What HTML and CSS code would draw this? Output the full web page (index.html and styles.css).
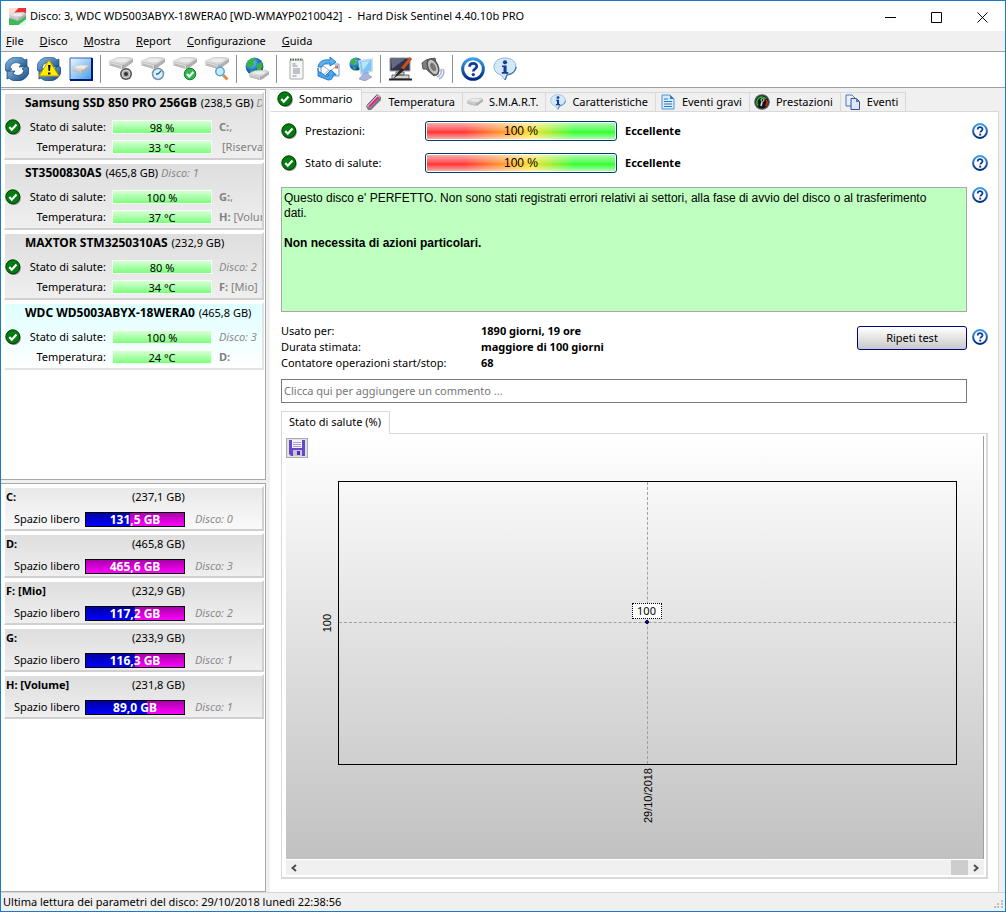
FILE: index.html
```
<!DOCTYPE html>
<html lang="it">

<head>
    <meta charset="UTF-8">
    <meta name="viewport" content="width=device-width, initial-scale=1.0">
    <title>Hard Disk Sentinel</title>
    <link rel="stylesheet" href="styles.css">
</head>

<body>
    <!-- shared icons -->
    <svg class="defs" aria-hidden="true">
        <defs>
            <linearGradient id="gBlue" x1="0" y1="0" x2="0" y2="1">
                <stop offset="0" stop-color="#3aa0e8" />
                <stop offset="1" stop-color="#002a80" />
            </linearGradient>
            <linearGradient id="gArrow" x1="0" y1="0" x2="1" y2="1">
                <stop offset="0" stop-color="#8fc4ea" />
                <stop offset="1" stop-color="#0b4380" />
            </linearGradient>
            <linearGradient id="gDisk" x1="0" y1="0" x2="1" y2="1">
                <stop offset="0" stop-color="#f4f4f4" />
                <stop offset="1" stop-color="#c4c4c4" />
            </linearGradient>
            <linearGradient id="gBox" x1="0" y1="0" x2="1" y2="1">
                <stop offset="0" stop-color="#f0f8ff" />
                <stop offset="1" stop-color="#3f9be8" />
            </linearGradient>
            <radialGradient id="gGlobe" cx="0.35" cy="0.3" r="0.8">
                <stop offset="0" stop-color="#8cd0ff" />
                <stop offset="0.5" stop-color="#1f70d0" />
                <stop offset="1" stop-color="#083070" />
            </radialGradient>
            <symbol id="ok" viewBox="0 0 16 16">
                <circle cx="8.8" cy="9" r="7" fill="#888" />
                <circle cx="7.8" cy="7.8" r="7" fill="#007c10" stroke="#003c00" />
                <path d="M4.3 8l2.5 2.7 4.7-5.2" fill="none" stroke="#fff" stroke-width="2.2" />
            </symbol>
            <symbol id="help" viewBox="0 0 16 16">
                <circle cx="8" cy="8" r="6.9" fill="#fff" stroke="url(#gBlue)" stroke-width="2" />
                <path d="M5.7 6.5c0-3 4.8-3 4.8-.2 0 1.6-2.3 1.6-2.3 3.3" fill="none" stroke="#123c96" stroke-width="1.8" />
                <circle cx="8.2" cy="11.7" r="1.1" fill="#123c96" />
            </symbol>
            <symbol id="info" viewBox="0 0 24 24">
                <path d="M12 1C5 1 1 5 1 10c0 4 3 7 7 8l4 5 2-5c5-1 9-4 9-8 0-5-4-9-11-9z" fill="#d4e8fa" stroke="#8cb4d8" />
                <path d="M12 23l2-5c5-1 9-4 9-8" fill="none" stroke="#4478a8" stroke-width="1.4" />
                <circle cx="12" cy="5.3" r="2.1" fill="#123c96" />
                <path d="M9 8.5h4.6v6.6h1.7v1.7H8.8v-1.7h1.7v-5H9z" fill="#123c96" />
            </symbol>
            <symbol id="disk" viewBox="0 0 24 12">
                <path d="M0 5L7 1l13-1 4 2v3l-8 6-3 1L0 8z" fill="#a4a4a4" />
                <path d="M0 4.500L7 .8 20 0l4 2-8 5.500-3 .5z" fill="url(#gDisk)" stroke="#c0c0c0" stroke-width=".5" />
                <path d="M0 4.800l13 3.400V12L0 8z" fill="#dcdcdc" />
                <path d="M1 6.800l11 3M1 8l11 3" stroke="#9c9c9c" stroke-width=".6" />
                <path d="M14 8.500l9.500-5.800V5L16 10.500l-2 .8z" fill="#b0b0b0" />
                <ellipse cx="13" cy="3.400" rx="6" ry="2" fill="#ececec" />
            </symbol>
            <symbol id="refresh" viewBox="0 0 24 24">
                <path d="M0 13C-1 5 5 0 12 0c4 0 6 1 8 3l2-1v8h-8l2-2.500C12 4 6 5.500 5 11l2 1-4 3z" fill="url(#gArrow)" stroke="#174f80" stroke-width=".7" />
                <path d="M24 11c1 8-5 13-12 13-4 0-6-1-8-3l-2 1v-8h8l-2 2.500c4 3.500 10 2 11-3.500l-2-1 4-3z" fill="url(#gArrow)" stroke="#0a3566" stroke-width=".7" />
            </symbol>
            <symbol id="globe" viewBox="0 0 16 16">
                <circle cx="8" cy="8" r="7.500" fill="url(#gGlobe)" />
                <path d="M3 3c3-3 6-2 6-1L7 4l1 2-3 3-3-1-1-2zM10 6l4-2 1 4-3 5-2-2zM5 11l3 1-1 3-3-2z" fill="#36b43c" />
            </symbol>
        </defs>
    </svg>

    <div class="window">
        <header class="titlebar">
            <svg class="app-icon" viewBox="0 0 18 18">
                <path d="M0 0h18v8H0z" fill="#ec3038" />
                <path d="M0 8h18v10H0z" fill="#3cbc58" />
                <path d="M0 0h10L2 9H0z" fill="#fbdcdc" />
                <path d="M10 18h8v-6z" fill="#e4fae8" />
                <use href="#disk" x="0" y="4" width="18" height="10" />
            </svg>
            <span class="title">Disco: 3, WDC WD5003ABYX-18WERA0 [WD-WMAYP0210042]  -  Hard Disk Sentinel 4.40.10b PRO</span>
            <div class="win-buttons">
                <button aria-label="Riduci a icona"><svg viewBox="0 0 11 11"><path d="M0 5.500h11" /></svg></button>
                <button aria-label="Ingrandisci"><svg viewBox="0 0 11 11"><path d="M.5.5h10v10H.5z" /></svg></button>
                <button aria-label="Chiudi"><svg viewBox="0 0 11 11"><path d="M.5.500l10 10M10.500.500l-10 10" /></svg></button>
            </div>
        </header>

        <nav class="menu">
            <a href="#"><u>F</u>ile</a>
            <a href="#"><u>D</u>isco</a>
            <a href="#"><u>M</u>ostra</a>
            <a href="#"><u>R</u>eport</a>
            <a href="#"><u>C</u>onfigurazione</a>
            <a href="#"><u>G</u>uida</a>
        </nav>

        <div class="toolbar">
            <button aria-label="Aggiorna"><svg viewBox="0 0 24 24"><use href="#refresh" /></svg></button>
            <button aria-label="Aggiorna avvisi"><svg viewBox="0 0 24 24"><use href="#refresh" />
                <path d="M12 3l10 16H2z" fill="#ffee00" stroke="#c09800" stroke-linejoin="round" />
                <path d="M11 8h2.600l-.6 6h-1.400zM11 15.500h2.400v2H11z" fill="#111" /></svg></button>
            <button aria-label="Disco"><svg viewBox="0 0 24 24">
                <path d="M1 1h22v22H1z" fill="url(#gBox)" stroke="#2c62b8" />
                <path d="M23 1v22H1" fill="none" stroke="#001a78" stroke-width="2" />
                <use href="#disk" x="3" y="7" width="17" height="10" /></svg></button>
            <i class="sep"></i>
            <button aria-label="Test disco"><svg viewBox="0 0 24 24"><use href="#disk" width="24" height="12" />
                <circle cx="17" cy="17" r="6" fill="#555" /><circle cx="17" cy="17" r="4" fill="#aaa" stroke="#ddd" />
                <circle cx="17" cy="17" r="2" fill="#333" /></svg></button>
            <button aria-label="Test breve"><svg viewBox="0 0 24 24"><use href="#disk" width="24" height="12" />
                <circle cx="17" cy="17" r="5.500" fill="#d8f0ff" stroke="#7890a4" stroke-width="1.500" />
                <path d="M17 17l3-3M17 17h-2" stroke="#1a68b0" stroke-width="1.300" /></svg></button>
            <button aria-label="Test esteso"><svg viewBox="0 0 24 24"><use href="#disk" width="24" height="12" />
                <circle cx="17" cy="17" r="5.800" fill="#2cb84c" stroke="#167a30" />
                <path d="M14 17l2.300 2.500 4-4.500" fill="none" stroke="#fff" stroke-width="2" /></svg></button>
            <button aria-label="Cerca"><svg viewBox="0 0 24 24"><use href="#disk" width="24" height="12" />
                <path d="M18 18l4.500 4.500" stroke="#d89048" stroke-width="3" />
                <circle cx="15" cy="14.500" r="4.200" fill="#c4ecff" stroke="#5ca0d8" stroke-width="1.500" /></svg></button>
            <i class="sep"></i>
            <button aria-label="Web"><svg viewBox="0 0 24 24"><use href="#globe" x="0" y="0" width="19" height="19" />
                <use href="#disk" x="4" y="12" width="20" height="12" /></svg></button>
            <i class="sep"></i>
            <button aria-label="Rapporto"><svg viewBox="0 0 24 24">
                <path d="M5 3h13v19H5z" fill="#f6f8f8" stroke="#a4acac" />
                <path d="M5 2.500h13" stroke="#686850" stroke-width="2" stroke-dasharray="1.500 1" />
                <path d="M7.500 7h3M7.500 9h5M8 12h7M8 14h7M8 16h7M7.500 19h4" stroke="#889" /></svg></button>
            <button aria-label="Invia rapporto"><svg viewBox="0 0 24 24">
                <path d="M4 7h18v12H4z" fill="#fff" stroke="#6c9cc8" /><path d="M18 8.500h3v3h-3z" fill="#e05848" />
                <path d="M5 8l8 6 8-6M5 19l7-6M21 19l-7-6" fill="none" stroke="#94b4d4" />
                <path d="M1 10C2 4 7 2 13 3V0l6 5-6 4V6C8 6 6 7 5 10z" fill="#56b4f4" stroke="#1668b0" stroke-width=".8" />
                <path d="M1 11v8l10 4c4 0 5-2 5-5h3l-5-5-5 5h3c0 2-3 2-6-1l-5-3z" fill="#4aa4ee" stroke="#1a68b8" stroke-width=".8" /></svg></button>
            <button aria-label="Rete"><svg viewBox="0 0 24 24"><use href="#globe" width="14" height="14" />
                <path d="M10 4l13-2v12l-11 3z" fill="#7cc4f8" stroke="#c0d8ec" stroke-width="1.500" />
                <path d="M12 5l9-1.500-7 10z" fill="#b8e4ff" />
                <path d="M15 16l4-1 .5 3 3.500 2-7 4-6-2z" fill="#a8b4dc" stroke="#8490b8" stroke-width=".6" /></svg></button>
            <i class="sep"></i>
            <button aria-label="Aspetto"><svg viewBox="0 0 24 24">
                <path d="M1 1h20v13H1z" fill="#30344c" stroke="#989ca8" /><path d="M2 2h14L3 12z" fill="#646a84" />
                <path d="M7 15h8v3H7zM3 18h17v4H3z" fill="#d4d4d4" stroke="#666" /><path d="M0 22.500h23" stroke="#222" stroke-width="2" />
                <path d="M22 1L13 12" stroke="#d04c1c" stroke-width="3" /><path d="M13 11l-3 3-6 8 8-6 3-3z" fill="#28201c" /></svg></button>
            <button aria-label="Suoni"><svg viewBox="0 0 24 24">
                <path d="M16 20c3-1 5-4 4-8M18 22c4-2 6-6 4-10" fill="none" stroke="#a8b0d4" stroke-width="1.600" />
                <path d="M1 6l4-3 9-2 3 15-4 3-8-7H2z" fill="#808080" stroke="#555" />
                <ellipse cx="12" cy="10" rx="5" ry="8.500" transform="rotate(-25 12 10)" fill="#c4c4c4" stroke="#555" stroke-width="1.500" />
                <ellipse cx="12" cy="10" rx="2.500" ry="4.500" transform="rotate(-25 12 10)" fill="#777" /></svg></button>
            <i class="sep"></i>
            <button aria-label="Aiuto"><svg viewBox="0 0 24 24"><use href="#help" width="24" height="24" /></svg></button>
            <button aria-label="Informazioni"><svg viewBox="0 0 24 24"><use href="#info" width="24" height="24" /></svg></button>
        </div>

        <div class="main">
            <aside class="sidebar">
                <div class="list disks">
                    <div class="disk">
                        <h3><b>Samsung SSD 850 PRO 256GB</b> (238,5 GB) <em>Disco: 0</em></h3>
                        <svg class="ok"><use href="#ok" /></svg>
                        <span class="lbl">Stato di salute:</span><span class="bar">98 %</span><span class="side"><b>C:</b>,</span>
                        <span class="lbl">Temperatura:</span><span class="bar">33 °C</span><span class="side indent">[Riservato]</span>
                    </div>
                    <div class="disk">
                        <h3><b>ST3500830AS</b> (465,8 GB) <em>Disco: 1</em></h3>
                        <svg class="ok"><use href="#ok" /></svg>
                        <span class="lbl">Stato di salute:</span><span class="bar">100 %</span><span class="side"><b>G:</b>,</span>
                        <span class="lbl">Temperatura:</span><span class="bar">37 °C</span><span class="side"><b>H:</b> [Volume]</span>
                    </div>
                    <div class="disk">
                        <h3><b>MAXTOR STM3250310AS</b> (232,9 GB)</h3>
                        <svg class="ok"><use href="#ok" /></svg>
                        <span class="lbl">Stato di salute:</span><span class="bar">80 %</span><span class="side"><em>Disco: 2</em></span>
                        <span class="lbl">Temperatura:</span><span class="bar">34 °C</span><span class="side"><b>F:</b> [Mio]</span>
                    </div>
                    <div class="disk selected">
                        <h3><b>WDC WD5003ABYX-18WERA0</b> (465,8 GB)</h3>
                        <svg class="ok"><use href="#ok" /></svg>
                        <span class="lbl">Stato di salute:</span><span class="bar">100 %</span><span class="side"><em>Disco: 3</em></span>
                        <span class="lbl">Temperatura:</span><span class="bar">24 °C</span><span class="side"><b>D:</b></span>
                    </div>
                </div>

                <div class="list volumes">
                    <div class="volume current">
                        <b>C:</b><span class="size">(237,1 GB)</span>
                        <span class="free">Spazio libero</span>
                        <span class="usage"><i style="width: 45%"></i><span>131,5 GB</span></span><em>Disco: 0</em>
                    </div>
                    <div class="volume">
                        <b>D:</b><span class="size">(465,8 GB)</span>
                        <span class="free">Spazio libero</span>
                        <span class="usage"><i style="width: 0%"></i><span>465,6 GB</span></span><em>Disco: 3</em>
                    </div>
                    <div class="volume">
                        <b>F: [Mio]</b><span class="size">(232,9 GB)</span>
                        <span class="free">Spazio libero</span>
                        <span class="usage"><i style="width: 50%"></i><span>117,2 GB</span></span><em>Disco: 2</em>
                    </div>
                    <div class="volume">
                        <b>G:</b><span class="size">(233,9 GB)</span>
                        <span class="free">Spazio libero</span>
                        <span class="usage"><i style="width: 50%"></i><span>116,3 GB</span></span><em>Disco: 1</em>
                    </div>
                    <div class="volume">
                        <b>H: [Volume]</b><span class="size">(231,8 GB)</span>
                        <span class="free">Spazio libero</span>
                        <span class="usage"><i style="width: 62%"></i><span>89,0 GB</span></span><em>Disco: 1</em>
                    </div>
                </div>
            </aside>

            <section class="content">
                <div class="tabs">
                    <button class="tab active"><svg viewBox="0 0 16 16"><use href="#ok" /></svg>Sommario</button>
                    <button class="tab"><svg viewBox="0 0 16 16">
                        <path d="M0 12L11 0l4 3v3L5 16H2z" fill="#777" /><path d="M1 12L11 1l3 2L4 14z" fill="#d8d8d8" />
                        <path d="M3 13l9.500-10" stroke="#e0208c" stroke-width="2.200" /><path d="M1.500 11l9-9.500" stroke="#555" /></svg>Temperatura</button>
                    <button class="tab"><svg viewBox="0 0 16 16"><use href="#disk" y="3" width="16" height="10" /></svg>S.M.A.R.T.</button>
                    <button class="tab"><svg viewBox="0 0 16 16"><use href="#info" width="16" height="16" /></svg>Caratteristiche</button>
                    <button class="tab"><svg viewBox="0 0 16 16">
                        <path d="M2 1h8l4 4v10H2z" fill="#d8ecfc" stroke="#4c94d8" /><path d="M10 1v4h4z" fill="#2c7cc8" />
                        <path d="M4 5h4M4 7.500h8M4 10h8M4 12.500h8" stroke="#2a78c8" /></svg>Eventi gravi</button>
                    <button class="tab"><svg viewBox="0 0 16 16">
                        <circle cx="8" cy="8" r="7.800" fill="#555" /><circle cx="8" cy="8" r="6" fill="#0c1c10" stroke="#111" />
                        <path d="M4 11.500A5 5 0 1 1 12 5" fill="none" stroke="#24c03c" stroke-width="1.500" />
                        <path d="M12.500 6a5 5 0 0 1-1 6" fill="none" stroke="#e02818" stroke-width="1.500" />
                        <circle cx="8.500" cy="6" r="1.500" fill="none" stroke="#ddd" /><path d="M8 8l-1 4" stroke="#ddd" stroke-width="1.500" /></svg>Prestazioni</button>
                    <button class="tab"><svg viewBox="0 0 16 16">
                        <path d="M1 1h6l3 3v8H1z" fill="#e8f0fc" stroke="#5474b4" /><path d="M6 4.500h5.500l3 3v8H6z" fill="#dce8fa" stroke="#34509c" />
                        <path d="M11 4.500V8h3.500z" fill="#5474b4" /></svg>Eventi</button>
                </div>

                <div class="page">
                    <div class="row rating">
                        <svg class="ok"><use href="#ok" /></svg>
                        <span class="name">Prestazioni:</span>
                        <div class="meter"><div>100 %</div></div>
                        <b>Eccellente</b>
                        <button class="help" aria-label="Aiuto"><svg><use href="#help" /></svg></button>
                    </div>
                    <div class="row rating">
                        <svg class="ok"><use href="#ok" /></svg>
                        <span class="name">Stato di salute:</span>
                        <div class="meter"><div>100 %</div></div>
                        <b>Eccellente</b>
                        <button class="help" aria-label="Aiuto"><svg><use href="#help" /></svg></button>
                    </div>

                    <div class="row advice">
                        <div class="message">
                            <p>Questo disco e' PERFETTO. Non sono stati registrati errori relativi ai settori, alla fase di avvio del disco o al trasferimento dati.</p>
                            <p><b>Non necessita di azioni particolari.</b></p>
                        </div>
                        <button class="help" aria-label="Aiuto"><svg><use href="#help" /></svg></button>
                    </div>

                    <div class="row stats">
                        <dl>
                            <dt>Usato per:</dt><dd>1890 giorni, 19 ore</dd>
                            <dt>Durata stimata:</dt><dd>maggiore di 100 giorni</dd>
                            <dt>Contatore operazioni start/stop:</dt><dd>68</dd>
                        </dl>
                        <button class="repeat">Ripeti test</button>
                        <button class="help" aria-label="Aiuto"><svg><use href="#help" /></svg></button>
                    </div>

                    <input class="comment" type="text" aria-label="Commento" placeholder="Clicca qui per aggiungere un commento ...">

                    <div class="graph">
                        <button class="subtab">Stato di salute (%)</button>
                        <div class="frame">
                            <div class="chart">
                                <button class="save" aria-label="Salva"><svg viewBox="0 0 16 16">
                                    <path d="M0 0h16v16H2l-2-2z" fill="#6848c8" /><path d="M3 0h10v8H3z" fill="#f4f2fc" />
                                    <path d="M4 2.500h8M4 4.500h8M4 6.500h8" stroke="#a898dc" /><path d="M4 10h9v6H4z" fill="#c8c4d4" />
                                    <path d="M8 11h3v4H8z" fill="#5030b0" /></svg></button>
                                <span class="ylabel">100</span>
                                <div class="plot">
                                    <i class="hline"></i><i class="vline"></i><i class="point"></i>
                                    <span class="value">100</span>
                                </div>
                                <span class="xlabel">29/10/2018</span>
                            </div>
                            <div class="scroll">
                                <button aria-label="Scorri a sinistra"><svg viewBox="0 0 8 8"><path d="M6 1L2.500 4 6 7" /></svg></button>
                                <i class="thumb"></i>
                                <button aria-label="Scorri a destra"><svg viewBox="0 0 8 8"><path d="M2 1l3.500 3L2 7" /></svg></button>
                            </div>
                        </div>
                    </div>
                </div>
            </section>
        </div>

        <footer class="status">
            <span>Ultima lettura dei parametri del disco: 29/10/2018 lunedì 22:38:56</span>
            <svg class="grip" viewBox="0 0 9 9"><path d="M7 0h2v2H7zM3 3h2v2H3zM7 3h2v2H7zM0 6h2v2H0zM3 6h2v2H3zM7 6h2v2H7z" fill="#bfbfbf" /></svg>
        </footer>
    </div>
</body>

</html>
```
FILE: styles.css
```
* {
    box-sizing: border-box;
}

body {
    margin: 0;
    font-family: "Noto Sans", "Open Sans", sans-serif;
    font-size: 11px;
    line-height: 16px;
    color: #000;
}

button, input {
    font: inherit;
    color: inherit;
    padding: 0;
    margin: 0;
}

h3, p, dl, dd {
    margin: 0;
    font-weight: normal;
}

.defs {
    position: absolute;
    width: 0;
    height: 0;
}

.window {
    display: flex;
    flex-direction: column;
    min-height: 100vh;
    border: 1px solid #1979ca;
    background: #f0f0f0;
}

/* title and menu */
.titlebar {
    display: flex;
    align-items: center;
    height: 30px;
    padding-left: 8px;
    background: #fff;
}

.app-icon {
    width: 17px;
    height: 17px;
    margin-right: 4px;
}

.title {
    flex: 1;
    white-space: pre;
}

.win-buttons {
    display: flex;
}

.win-buttons button {
    width: 46px;
    height: 30px;
    border: none;
    background: none;
}

.win-buttons svg {
    width: 11px;
    height: 11px;
    fill: none;
    stroke: #000;
    vertical-align: middle;
}

.menu {
    display: flex;
    gap: 16px;
    height: 21px;
    padding: 2px 5px;
    border-bottom: 1px solid #a0a0a0;
}

.menu a {
    color: #000;
    text-decoration: none;
}

.toolbar {
    display: flex;
    height: 36px;
    background: #fff;
    border-bottom: 1px solid #a0a0a0;
}

.toolbar button {
    display: flex;
    align-items: center;
    justify-content: center;
    width: 32px;
    height: 34px;
    border: none;
    background: none;
}

.toolbar svg {
    width: 24px;
    height: 24px;
}

.sep {
    width: 1px;
    height: 28px;
    margin: 3px 4px 3px 3px;
    background: #909090;
}

/* left side */
.main {
    flex: 1;
    display: flex;
    gap: 3px;
}

.sidebar {
    display: flex;
    flex-direction: column;
    gap: 3px;
    width: 265px;
    padding-top: 1px;
}

.list {
    padding: 2px 1px 0 3px;
    background: #fff;
    border: 1px solid #a6a8ae;
    border-left: none;
}

.disks {
    height: 391px;
}

.volumes {
    flex: 1;
}

.disk, .volume {
    background: linear-gradient(#dedede, #efefef);
    border: 2px solid #d0d0d0;
    border-top-color: #fff;
    border-left: 1px solid #fff;
    overflow: hidden;
    white-space: nowrap;
}

.disk {
    display: grid;
    grid-template-columns: 15px 80px 100px 1fr;
    grid-template-rows: 23px 20px 20px;
    column-gap: 6px;
    align-items: center;
    height: 68px;
    margin-bottom: 2px;
}

.disk.selected {
    background: linear-gradient(#deffff, #fff);
    border-right-color: #e4e4e4;
    border-bottom-color: #e4e4e4;
}

.disk h3 {
    grid-column: 1 / -1;
    align-self: start;
    padding-left: 20px;
    font-size: 11px;
    line-height: 18px;
}

.disk h3 b {
    margin-right: 1px;
    font-size: 12px;
}

.disk .ok {
    grid-column: 1;
    grid-row: 2;
}

.ok {
    width: 16px;
    height: 16px;
}

.lbl {
    grid-column: 2;
    text-align: right;
}

.bar {
    height: 14px;
    line-height: 14px;
    text-align: center;
    background: linear-gradient(#d8ffd8, #7cff7c);
    border: 1px solid #f4fff4;
}

.side {
    margin-left: 1px;
    color: #808080;
}

.indent {
    padding-left: 3px;
}

em {
    color: #8a8a8a;
}

.volume {
    display: grid;
    grid-template-columns: 74px 100px 1fr;
    grid-template-rows: 18px 20px;
    gap: 3px 5px;
    align-items: center;
    height: 45px;
    padding-left: 1px;
    margin-bottom: 2px;
}

.volume.current {
    background: linear-gradient(#e8e8e8, #fafafa);
}

.size {
    grid-column: 2 / 4;
    padding-left: 47px;
}

.free {
    text-align: right;
}

.volume em {
    padding-left: 5px;
}

.usage {
    position: relative;
    height: 15px;
    border: 1px solid #000;
    background: linear-gradient(#a800a8, #ff00ff);
    color: #fff;
    font-size: 12px;
    font-weight: bold;
    text-align: center;
    line-height: 14px;
}

.usage i {
    position: absolute;
    left: 0;
    top: 0;
    bottom: 0;
    background: linear-gradient(#0000a0, #0000ff);
}

.usage span {
    position: relative;
}

/* right side */
.content {
    flex: 1;
    display: flex;
    flex-direction: column;
    min-width: 0;
    padding: 1px 6px 0 1px;
}

.tabs {
    display: flex;
    align-items: flex-end;
    height: 22px;
}

.tab {
    display: flex;
    align-items: center;
    gap: 6px;
    height: 19px;
    padding: 0 7px 0 4px;
    background: #f0f0f0;
    border: 1px solid #d9d9d9;
    border-left: none;
    border-bottom: none;
    white-space: nowrap;
}

.tab svg {
    width: 16px;
    height: 16px;
}

.tab.active {
    height: 23px;
    margin-bottom: -1px;
    padding: 0 9px 4px 7px;
    background: #fff;
}

.page {
    flex: 1;
    display: flex;
    flex-direction: column;
    padding: 9px 10px 13px;
    background: #fff;
    border: 1px solid #d9d9d9;
    border-bottom: none;
}

.tab.active, .page {
    border-left-color: #fff;
}

.row {
    display: flex;
    align-items: flex-start;
    gap: 5px;
}

.rating {
    height: 32px;
    gap: 8px;
}

.rating .ok, .rating .name, .rating b {
    margin-top: 2px;
}

.rating .name {
    width: 112px;
}

.meter {
    width: 192px;
    height: 20px;
    padding: 1px;
    border: 1px solid #003c74;
    border-radius: 3px;
}

.meter div {
    height: 16px;
    font: 12px/16px "Liberation Sans", sans-serif;
    text-align: center;
    background: linear-gradient(rgba(255,255,255,.6), rgba(255,255,255,.15) 50%, transparent 55%, rgba(255,255,255,.6)), linear-gradient(90deg, #ff3030 20%, #ffe020 55%, #30ff30 78%);
}

.help {
    width: 16px;
    height: 16px;
    border: none;
    background: none;
    flex: none;
}

.help svg {
    display: block;
    width: 16px;
    height: 16px;
}

.row .help {
    margin-left: auto;
}

.rating .help, .advice .help {
    margin-top: 2px;
}

.message {
    flex: 1;
    height: 125px;
    margin-top: 2px;
    padding: 3px 20px 3px 2px;
    background: #bfffbf;
    border: 1px solid #a8a8a8;
    font: 12px/15px "Liberation Sans", sans-serif;
}

.message p {
    margin-bottom: 15px;
}

.stats {
    margin-top: 11px;
}

.stats dl {
    flex: 1;
    display: grid;
    grid-template-columns: 200px 1fr;
}

.stats dd {
    font-weight: bold;
}

.repeat {
    width: 110px;
    height: 24px;
    margin-top: 3px;
    background: linear-gradient(#fff, #c8c8c8);
    border: 1px solid #000080;
    border-radius: 3px;
}

.stats .help {
    margin: 6px 0 0;
}

.comment {
    height: 24px;
    margin: 8px 21px 8px 0;
    padding: 0 2px 2px;
    border: 1px solid #7a7a7a;
}

.comment::placeholder {
    color: #757575;
    opacity: 1;
}

.graph {
    flex: 1;
    display: flex;
    flex-direction: column;
    align-items: flex-start;
}

.subtab {
    position: relative;
    height: 23px;
    margin-bottom: -1px;
    padding: 0 8px 2px 7px;
    background: #fff;
    border: 1px solid #d9d9d9;
    border-bottom: none;
}

.frame {
    align-self: stretch;
    flex: 1;
    display: flex;
    flex-direction: column;
    padding: 2px 2px 2px 4px;
    border: 1px solid #d9d9d9;
    border-right-width: 2px;
    border-bottom-width: 2px;
}

.chart {
    flex: 1;
    display: grid;
    grid-template-columns: 52px 1fr 26px;
    grid-template-rows: 45px 1fr 94px;
    background: linear-gradient(#fff, #c1c1c1);
    border-right: 1px solid #a0a0a0;
}

.save {
    width: 22px;
    height: 20px;
    margin-top: 2px;
    background: #e1e1e1;
    border: 1px solid #adadad;
}

.save svg {
    display: block;
    width: 16px;
    height: 16px;
    margin: auto;
}

.plot {
    grid-column: 2;
    grid-row: 2;
    position: relative;
    border: 1px solid #000;
}

.hline, .vline, .point, .value {
    position: absolute;
}

.hline {
    left: 0;
    right: 0;
    top: 50%;
    margin-top: -1px;
    border-top: 1px dashed #a0a0a0;
}

.vline {
    top: 0;
    bottom: 0;
    left: 50%;
    margin-left: -1px;
    border-left: 1px dashed #a0a0a0;
}

.point {
    left: 50%;
    top: 50%;
    width: 4px;
    height: 4px;
    margin: -3px;
    border-radius: 50%;
    border: 1px solid #000;
    background: #0000ff;
}

.value {
    left: 50%;
    bottom: 50%;
    width: 30px;
    height: 16px;
    margin: 0 0 4px -16px;
    border: 1px dotted #000;
    background: #fff;
    text-align: center;
    line-height: 14px;
}

.ylabel, .xlabel {
    writing-mode: vertical-rl;
    transform: rotate(180deg);
    font: 11px/14px "Liberation Sans", sans-serif;
}

.ylabel {
    grid-column: 1;
    grid-row: 2;
    place-self: center end;
    margin-right: 4px;
}

.xlabel {
    grid-column: 2;
    grid-row: 3;
    place-self: start center;
    margin-top: 3px;
}

.scroll {
    display: flex;
    height: 15px;
    margin-top: 1px;
    background: #f0f0f0;
}

.scroll button {
    width: 16px;
    border: none;
    background: none;
}

.scroll svg {
    display: block;
    width: 8px;
    height: 8px;
    margin: auto;
    fill: none;
    stroke: #505050;
    stroke-width: 2;
}

.thumb {
    width: 17px;
    margin-left: auto;
    background: #cdcdcd;
}

.status {
    display: flex;
    align-items: center;
    justify-content: space-between;
    height: 19px;
    padding-left: 2px;
    border-top: 1px solid #d7d7d7;
}

.grip {
    align-self: flex-end;
    width: 9px;
    height: 9px;
    margin: 2px;
}
```
